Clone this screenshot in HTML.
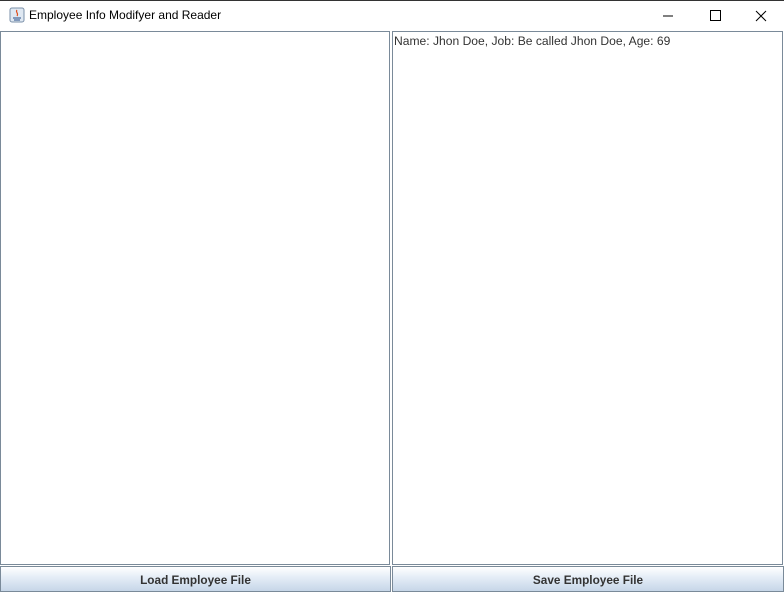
<!DOCTYPE html>
<html><head><style>
body{margin:0;width:784px;height:592px;background:#fff;position:relative;overflow:hidden;font-family:"Liberation Sans",sans-serif}
.top{position:absolute;left:0;top:0;width:784px;height:1px;background:#333}
.title{position:absolute;left:29px;top:8px;color:#000;font-family:"Liberation Sans",sans-serif;font-size:12px}
.pan{position:absolute;top:31px;height:532px;border:1px solid #7a8a99;background:#fff}
.btn{position:absolute;top:566px;height:24px;border:1px solid #7a8a99;background:linear-gradient(#fff,#e6eef7 40%,#c6d6e8);font-weight:bold;font-size:11.8px;color:#333;text-align:center;line-height:26px}
</style></head><body>
<div class="top"></div>
<svg style="position:absolute;left:9px;top:7px" width="16" height="16"><rect x="1" y="1" width="14" height="14" rx="2" fill="#dfe8f2" stroke="#7a8fa8"/><path d="M4 11h8M5 13h6" stroke="#4a6a9a" stroke-width="1.2"/><path d="M8 3c-2 2 2 3 0 6" stroke="#e05020" stroke-width="1.2" fill="none"/></svg>
<div class="title">Employee Info Modifyer and Reader</div>
<svg style="position:absolute;left:660px;top:8px" width="110" height="16"><path d="M3 8h10" stroke="#000"/><rect x="50.5" y="2.5" width="10" height="10" fill="none" stroke="#000"/><path d="M96 3l10 10M106 3l-10 10" stroke="#000"/></svg>
<div class="pan" style="left:0;width:388px"></div>
<div class="pan" style="left:392px;width:389px"><div style="position:absolute;left:1px;top:2px;font-size:12.1px;color:#333">Name: Jhon Doe, Job: Be called Jhon Doe, Age: 69</div></div>
<div class="btn" style="left:0;width:389px">Load Employee File</div>
<div class="btn" style="left:392px;width:390px">Save Employee File</div>
</body></html>
